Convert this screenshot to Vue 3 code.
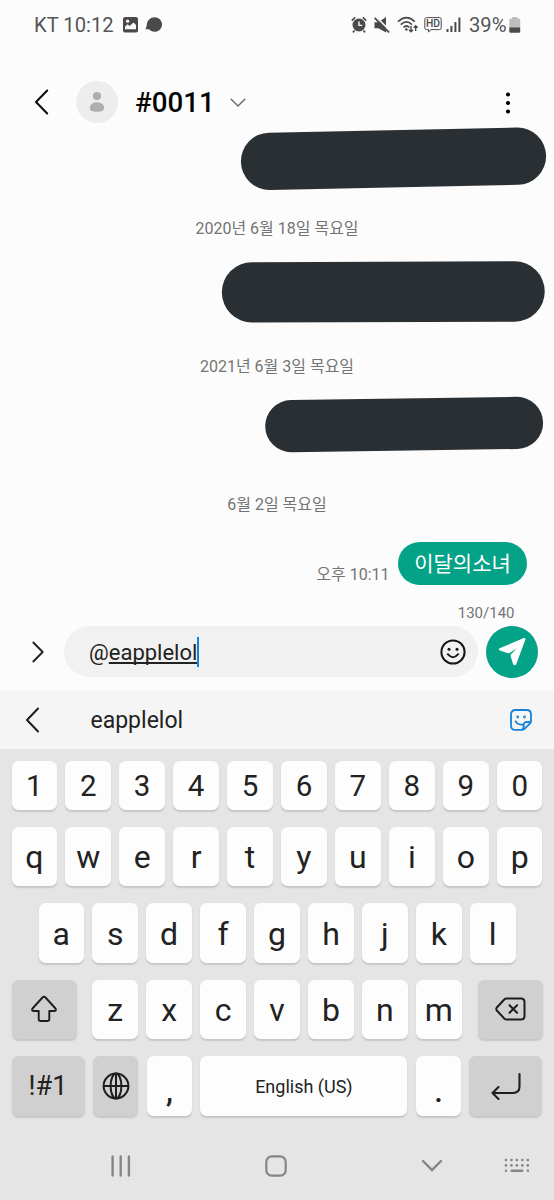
<script setup>
const digits = '1234567890'.split('')
const top = 'qwertyuiop'.split('')
const home = 'asdfghjkl'.split('')
const lower = 'zxcvbnm'.split('')
</script>

<template>
  <div class="screen">
    <div class="status">
      <span class="carrier">KT 10:12</span>
      <svg class="i-pic" width="15" height="16" viewBox="0 0 15 16">
        <rect width="15" height="15.4" rx="2" fill="#4a4a4a" />
        <path d="M2 12.2V9.8L4.6 7.2L6.6 9L10.6 5.6L13 8V12.2Z" fill="#fcfcfc" />
        <circle cx="4.6" cy="4.2" r="1.6" fill="#fcfcfc" />
      </svg>
      <svg class="i-blob" width="18" height="16" viewBox="0 0 18 16">
        <path d="M9.6 .3C13.7 .3 17 3.5 17 7.4C17 11.4 13.8 14.7 9.6 14.7C7.2 14.7 5.4 13.8 4 12.3L.3 12.2C1.2 11.1 1.5 9.6 1.8 7.8C2.2 3.5 5.4 .3 9.6 .3Z" fill="#4a4a4a" />
      </svg>
      <div class="right">
        <svg width="16" height="18" viewBox="0 0 16 18">
          <circle cx="8" cy="9" r="6.5" fill="#4a4a4a" />
          <path d="M.8 4.6L4.2 1.4M15.2 4.6L11.8 1.4M3.5 14.5L2 16.4M12.5 14.5L14 16.4" stroke="#4a4a4a" stroke-width="1.7" fill="none" />
          <path d="M8 5.4V9.4H11.2" stroke="#fcfcfc" stroke-width="1.4" fill="none" />
        </svg>
        <svg class="i-mute" width="16" height="18" viewBox="0 0 16 18">
          <path d="M.5 6.2H4.4L12 .9V16.6L4.4 12.2H.5Z" fill="#4a4a4a" />
          <path d="M1.6 .4L16 15" stroke="#fcfcfc" stroke-width="1.6" />
          <path d="M.6 1.800L15 16.400" stroke="#4a4a4a" stroke-width="1.900" />
        </svg>
        <svg class="i-wifi" width="22" height="18" viewBox="0 0 22 18">
          <path d="M1 5.6Q9.4 -2.4 17.8 5.6M3.8 8.6Q9.4 3.2 15 8.6M6.5 11.4Q9.4 8.6 12.3 11.4" fill="none" stroke="#4a4a4a" stroke-width="1.7" />
          <circle cx="9.4" cy="13.5" r="1.300" fill="#4a4a4a" />
          <path d="M14 10V15.6M12 13.7L14 15.8L16 13.7M18.7 15V10M16.8 11.8L18.7 9.8L20.6 11.8" fill="none" stroke="#4a4a4a" stroke-width="1.4" />
        </svg>
        <svg class="i-hd" width="18" height="18" viewBox="0 0 18 18">
          <path d="M2.6 1.600H15.4Q17.200 1.600 17.200 3.400V11.8Q17.200 13.600 15.4 13.600H7L4.500 16V13.600H2.6Q.8 13.600 .8 11.8V3.400Q.8 1.600 2.6 1.600Z" fill="none" stroke="#4a4a4a" stroke-width="1" />
          <text x="9" y="11.300" text-anchor="middle" font-size="10.300" font-weight="500" fill="#4a4a4a">HD</text>
        </svg>
        <svg class="i-sig" width="16" height="18" viewBox="0 0 16 18">
          <path d="M1.500 13V16M5.400 10V16M9.400 6V16M13.400 1.500V16" stroke="#4a4a4a" stroke-width="2" />
        </svg>
        <span class="pct">39%</span>
        <svg class="i-bat" width="12" height="18" viewBox="0 0 12 18">
          <path d="M3 2.500V1.500Q3 1 3.500 1H8Q8.500 1 8.500 1.500V2.500H10Q11.200 2.500 11.200 3.700V12H.3V3.700Q.3 2.500 1.500 2.500Z" fill="#bdbdbd" />
          <path d="M.3 11.600H11.200V15.500Q11.200 16.700 10 16.700H1.500Q.3 16.700 .3 15.500Z" fill="#4a4a4a" />
        </svg>
      </div>
    </div>

    <div class="header">
      <svg class="back" width="15" height="26" viewBox="0 0 15 26">
        <path d="M13.200 1.500L2 13L13.200 24.500" fill="none" stroke="#0a0a0a" stroke-width="2" stroke-linecap="round" stroke-linejoin="round" />
      </svg>
      <div class="avatar">
        <svg width="16" height="20" viewBox="0 0 16 20">
          <circle cx="8" cy="4.100" r="4.100" fill="#aeaeae" />
          <path d="M.9 16C.9 12.500 4 10.300 8 10.300S15.100 12.500 15.100 16C15.100 18.800 12.500 19.800 8 19.800S.9 18.800 .9 16Z" fill="#aeaeae" />
        </svg>
      </div>
      <h1>#0011</h1>
      <svg class="chev" width="16" height="10" viewBox="0 0 16 10">
        <path d="M1.200 1.200L8 8L14.800 1.200" fill="none" stroke="#6c6c6c" stroke-width="1.500" stroke-linecap="round" stroke-linejoin="round" />
      </svg>
      <svg class="more" width="6" height="22" viewBox="0 0 6 22">
        <circle cx="3" cy="2.500" r="2.100" /><circle cx="3" cy="11" r="2.100" /><circle cx="3" cy="19.500" r="2.100" />
      </svg>
    </div>

    <div class="thread">
      <svg class="hidden" width="554" height="64" viewBox="0 127 554 64">
        <path d="M269.500 161.300L517.500 156.200" stroke-width="57.200" />
      </svg>
      <p class="date d1">2020년 6월 18일 목요일</p>
      <svg class="hidden" width="554" height="62" viewBox="0 261 554 62">
        <path d="M252 292.300L514.600 291.500" stroke-width="60.300" />
      </svg>
      <p class="date d2">2021년 6월 3일 목요일</p>
      <svg class="hidden" width="554" height="57" viewBox="0 396 554 57">
        <path d="M291.300 426.100L517 422.900" stroke-width="52.200" />
      </svg>
      <p class="date d3">6월 2일 목요일</p>
      <div class="sent">
        <span class="time">오후 10:11</span>
        <span class="bubble">이달의소녀</span>
      </div>
      <p class="count">130/140</p>
    </div>

    <div class="composer">
      <svg class="expand" width="12" height="22" viewBox="0 0 12 22">
        <path d="M1.300 1.500L10.700 11L1.300 20.500" fill="none" stroke="#1d1d1d" stroke-width="1.800" stroke-linecap="round" stroke-linejoin="round" />
      </svg>
      <div class="field">
        <span class="typed">@<span class="word">eapplelol</span></span><i class="caret"></i>
        <svg class="smile" width="26" height="26" viewBox="0 0 26 26">
          <circle cx="13" cy="13" r="11.600" fill="none" stroke="#161616" stroke-width="2" />
          <circle cx="9" cy="10.200" r="1.500" fill="#161616" /><circle cx="17" cy="10.200" r="1.500" fill="#161616" />
          <path d="M7.800 15.200Q13 21.200 18.200 15.200" fill="none" stroke="#161616" stroke-width="1.900" stroke-linecap="round" />
        </svg>
      </div>
      <div class="send">
        <svg width="28" height="30" viewBox="0 0 28 30">
          <path d="M1.600 11.300L25.800 1.100Q27.900 .5 27.400 2.600L18.200 27.300Q17.100 29.200 15.200 27.500L12.600 19.300Q12.300 18.200 13.100 17.300L18.700 11.200L11.600 16Q10.900 16.500 10 16.200L1.800 13.400Q-.1 12.400 1.600 11.300Z" fill="#fff" />
        </svg>
      </div>
    </div>

    <div class="suggest">
      <svg width="15" height="26" viewBox="0 0 15 26">
        <path d="M13 1.500L2 13L13 24.500" fill="none" stroke="#1d1d1d" stroke-width="2" stroke-linecap="round" stroke-linejoin="round" />
      </svg>
      <span>eapplelol</span>
      <svg class="sticker" width="22" height="22" viewBox="0 0 22 22" fill="none" stroke="#1581d8" stroke-width="1.800" stroke-linecap="round" stroke-linejoin="round">
        <path d="M12 20.900H5.500Q1 20.900 1 16.400V5.500Q1 1 5.500 1H16.500Q21 1 21 5.500V12.400Q20.800 13.700 19.800 14.700L14.500 19.900Q13.300 20.900 12 20.900Q14 19.500 13.600 17Q13.400 13 17 13Q19.800 13.200 20.900 12.400" />
        <path d="M5.600 12.300Q7.500 16 13 15.600" />
        <circle cx="7.700" cy="8" r=".5" /><circle cx="14.500" cy="8" r=".5" />
      </svg>
    </div>

    <div class="keyboard">
      <div class="row nums"><b v-for="k in digits" :key="k" class="key">{{ k }}</b></div>
      <div class="row"><b v-for="k in top" :key="k" class="key">{{ k }}</b></div>
      <div class="row home"><b v-for="k in home" :key="k" class="key">{{ k }}</b></div>
      <div class="row">
        <b class="key dark shift">
          <svg width="26" height="28" viewBox="0 0 26 28">
            <path d="M11.500 2.500Q13 1 14.500 2.500L24.500 13.500Q25.700 15.600 23.500 16H18.300V24Q18.300 26 16.300 26H9.700Q7.700 26 7.700 24V16H2.500Q.3 15.600 1.500 13.500Z" fill="none" stroke="#1d1d1d" stroke-width="1.900" stroke-linejoin="round" />
          </svg>
        </b>
        <b v-for="k in lower" :key="k" class="key">{{ k }}</b>
        <b class="key dark del">
          <svg width="31" height="24" viewBox="0 0 31 24" fill="none" stroke="#1d1d1d" stroke-width="2" stroke-linejoin="round" stroke-linecap="round">
            <path d="M11.500 1.500H26Q29.500 1.500 29.500 5V19Q29.500 22.500 26 22.500H11.500Q10.300 22.500 9.500 21.700L1.800 13.500Q.7 12 1.800 10.500L9.500 2.300Q10.300 1.500 11.500 1.500Z" />
            <path d="M14.500 8.200L22.100 15.800M22.100 8.200L14.500 15.800" />
          </svg>
        </b>
      </div>
      <div class="row">
        <b class="key dark sym">!#1</b>
        <b class="key dark">
          <svg width="28" height="28" viewBox="0 0 28 28" fill="none" stroke="#1d1d1d" stroke-width="2">
            <circle cx="14" cy="14" r="12.400" /><ellipse cx="14" cy="14" rx="5.400" ry="12.400" /><path d="M1.600 14H26.400M14 1.600V26.400" />
          </svg>
        </b>
        <b class="key punct">,</b>
        <b class="key space">English (US)</b>
        <b class="key punct">.</b>
        <b class="key dark enter">
          <svg width="30" height="28" viewBox="0 0 30 28" fill="none" stroke="#1d1d1d" stroke-width="2.100" stroke-linecap="round" stroke-linejoin="round">
            <path d="M28.500 2V14.500Q28.500 21 22 21H1.700M7.500 15L1.500 21L7.500 27" />
          </svg>
        </b>
      </div>
      <div class="nav">
        <svg class="n1" width="20" height="22" viewBox="0 0 20 22"><path d="M1.600 1.500V20.500M9.700 1.500V20.500M17.900 1.500V20.500" stroke="#858585" stroke-width="2.400" stroke-linecap="round" /></svg>
        <svg class="n2" width="22" height="22" viewBox="0 0 22 22"><rect x="1.300" y="1.300" width="19.400" height="19.400" rx="5.500" fill="none" stroke="#858585" stroke-width="2.200" /></svg>
        <svg class="n3" width="22" height="14" viewBox="0 0 22 14"><path d="M2 2L11 11L20 2" fill="none" stroke="#858585" stroke-width="2.400" stroke-linecap="round" /></svg>
        <svg class="n4" width="26" height="16" viewBox="0 0 26 16" fill="none" stroke="#858585" stroke-width="2.700" stroke-linecap="round">
          <path d="M2 2H24M2 7.400H24" stroke-dasharray="0 5.450" />
          <path d="M2 12.800H2.010M23.900 12.800H23.910M7.700 12.800H18.200" stroke-width="2.500" />
        </svg>
      </div>
    </div>
  </div>
</template>

<style>
body { margin: 0; background: #fcfcfc; }
</style>

<style scoped>
.screen { width: 554px; height: 1200px; overflow: hidden; background: #fcfcfc; font-family: Roboto, "Noto Sans CJK KR", sans-serif; display: flex; flex-direction: column; }
svg { display: block; flex: none; }
p, h1 { margin: 0; }
.status { height: 49px; display: flex; align-items: center; padding: 0 33px 0 34px; color: #555; font-size: 20.200px; white-space: nowrap; box-sizing: border-box; flex: none; }
.carrier { width: 88.500px; }
.i-blob { margin-left: 7px; }
.right { margin-left: auto; display: flex; align-items: center; }
.i-mute { margin-left: 7px; }
.i-wifi { margin-left: 6.500px; }
.i-hd { margin-left: 5.500px; }
.i-sig { margin-left: 4px; }
.pct { margin-left: 7px; width: 40px; }
.header { height: 78px; flex: none; box-sizing: border-box; padding: 29px 43px 0 34px; display: flex; align-items: flex-start; }
.header > * { flex: none; }
.back { margin-top: 11px; }
.avatar { width: 42px; height: 42px; margin: 3px 0 0 27px; border-radius: 50%; background: #ededed; display: flex; align-items: center; justify-content: center; }
h1 { margin: 8px 0 0 17px; width: 81px; font-size: 27.700px; line-height: 34px; font-weight: 500; color: #050505; white-space: nowrap; }
.chev { margin: 20px 0 0 14px; }
.more { margin: 14px 0 0 auto; }
.thread { flex: none; height: 499px; display: flex; flex-direction: column; }
.hidden { fill: none; stroke: #2a2f33; stroke-linecap: round; }
.date { height: 20px; line-height: 20px; text-align: center; font-size: 16px; color: #747474; white-space: nowrap; flex: none; }
.d1 { margin: 28px 0 22px; }
.d2 { margin: 34px 0 19px; }
.d3 { margin: 42px 0 27px; }
.sent { height: 43px; display: flex; justify-content: flex-end; padding-right: 27px; flex: none; }
.time { font-size: 16px; line-height: 20px; margin: 23px 8.500px 0 0; color: #747474; }
.bubble { width: 129px; height: 43px; border-radius: 22px; background: #04a287; color: #fff; font-size: 21px; line-height: 45px; text-align: center; }
.count { font-size: 15px; line-height: 20px; color: #747474; margin-top: 18px; padding-right: 39.500px; text-align: right; }
.composer { height: 64px; flex: none; display: flex; align-items: flex-start; }
.expand { margin: 14.500px 0 0 32px; }
.field { margin-left: 20px; width: 414px; height: 51px; border-radius: 26px; background: #f1f1f1; display: flex; align-items: center; box-sizing: border-box; padding: 0 12px 0 25px; }
.typed { font-size: 22px; color: #222; white-space: nowrap; padding-top: 1px; }
.word { text-decoration: underline; text-decoration-thickness: 1.500px; text-underline-offset: 2px; text-decoration-skip-ink: none; }
.caret { width: 2px; height: 30px; background: #1581d8; }
.smile { margin-left: auto; }
.send { width: 52px; height: 52px; margin-left: 8px; border-radius: 50%; background: #04a287; display: flex; align-items: center; justify-content: center; }
.suggest { height: 59px; flex: none; background: #f5f5f5; display: flex; align-items: center; padding: 0 22px 0 25px; font-size: 23px; color: #222; }
.suggest span { margin-left: 50.500px; padding-top: 2px; }
.sticker { margin-left: auto; }
.keyboard { flex: 1; background: #e5e5e5; padding: 11.500px 11.500px 0; display: flex; flex-direction: column; }
.row { height: 59.500px; flex: none; display: flex; justify-content: space-between; margin-bottom: 17px; }
.nums { height: 49px; }
.home { padding: 0 27px; }
.key { box-sizing: border-box; width: 45.500px; flex: none; height: 100%; border-radius: 6.500px; background: #fdfdfd; box-shadow: 0 1.500px 1.500px #c6c6c6; color: #222; font-weight: 400; font-size: 32px; line-height: 1; display: flex; align-items: center; justify-content: center; white-space: nowrap; padding-top: 2px; }
.nums .key { font-size: 29.500px; padding-top: 3px; }
.dark { background: #d0d0d0; padding-top: 0; }
.shift { width: 65px; margin-right: 7.500px; }
.del { width: 65px; margin-left: 7.500px; }
.sym { width: 73px; font-size: 27px; padding-top: 2px; }
.enter { width: 73px; }
.space { width: 207px; font-size: 18px; }
.punct { font-weight: 500; font-size: 31px; padding-top: 12px; }
.nav { display: flex; align-items: center; height: 66px; }
.n1 { margin-left: 99.500px; }
.n2 { margin-left: 134px; }
.n3 { margin-left: 133.500px; }
.n4 { margin-left: 61.500px; }
</style>
